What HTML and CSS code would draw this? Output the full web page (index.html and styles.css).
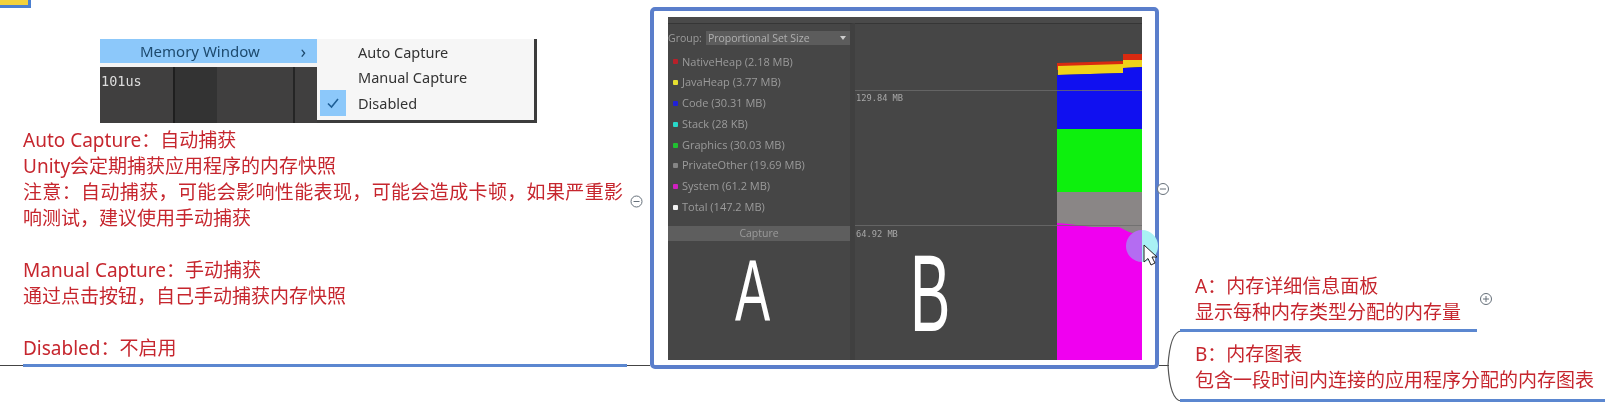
FILE: index.html
```html
<!DOCTYPE html>
<html lang="en">
<head>
  <meta charset="UTF-8">
  <title>Memory Window</title>
  <link rel="stylesheet" href="styles.css">
</head>
<body>
  <div class="map">
    <div class="corner"></div>

    <!-- menu screenshot -->
    <div class="menu-shot">
      <div class="menu-left">
        <div class="menu-item"><span>Memory Window</span><span class="arrow">&#8250;</span></div>
        <div class="menu-dark">
          <span class="time">101us</span>
          <i class="stripe s1"></i>
          <i class="stripe s2"></i>
        </div>
      </div>
      <div class="submenu">
        <div class="sub-item"><span class="tick"></span>Auto Capture</div>
        <div class="sub-item"><span class="tick"></span>Manual Capture</div>
        <div class="sub-item"><span class="tick on">
          <svg width="14" height="12" viewBox="0 0 14 12"><path d="M2 6.5 L5.5 10 L12 2" fill="none" stroke="#1f5f96" stroke-width="1.6"/></svg>
        </span>Disabled</div>
      </div>
    </div>

    <!-- left topic -->
    <div class="topic topic-left">
      <p>Auto Capture：自动捕获<br>Unity会定期捕获应用程序的内存快照<br><span class="wide">注意：自动捕获，可能会影响性能表现，可能会造成卡顿，如果严重影</span><br>响测试，建议使用手动捕获</p>
      <p>Manual Capture：手动捕获<br>通过点击按钮，自己手动捕获内存快照</p>
      <p>Disabled：不启用</p>
    </div>

    <!-- center image topic -->
    <div class="frame">
      <div class="profiler">
        <div class="side">
          <div class="group-row">
            <span>Group:</span>
            <div class="select"><span>Proportional Set Size</span><i class="caret"></i></div>
          </div>
          <ul class="legend">
            <li><i class="dot c-native"></i>NativeHeap (2.18 MB)</li>
            <li><i class="dot c-java"></i>JavaHeap (3.77 MB)</li>
            <li><i class="dot c-code"></i>Code (30.31 MB)</li>
            <li><i class="dot c-stack"></i>Stack (28 KB)</li>
            <li><i class="dot c-gfx"></i>Graphics (30.03 MB)</li>
            <li><i class="dot c-other"></i>PrivateOther (19.69 MB)</li>
            <li><i class="dot c-system"></i>System (61.2 MB)</li>
            <li><i class="dot c-total"></i>Total (147.2 MB)</li>
          </ul>
          <div class="capture">Capture</div>
          <span class="hand hand-a">A</span>
        </div>
        <div class="chart">
          <div class="plot">
            <div class="scale scale-top">129.84 MB</div>
            <div class="scale scale-mid">64.92 MB</div>
            <span class="hand hand-b">B</span>
          </div>
          <svg class="bands" width="85" height="336" viewBox="0 0 85 336">
            <path d="M0 39 L66 37 L66 30 L85 30 L85 40 L66 44 L0 46 Z" fill="#d92a10"/>
            <path d="M1 42 L66 40 L66 36 L85 36 L85 43 L66 44 L66 49 L1 51 Z" fill="#efd21a"/>
            <path d="M0 51 L66 49 L66 44 L85 43 L85 106 L0 105 Z" fill="#1010f0"/>
            <path d="M0 105 L85 105 L85 169 L0 169 Z" fill="#0df00d"/>
            <path d="M0 168 L85 168 L85 215 L0 215 Z" fill="#8a8686"/>
            <path d="M0 199 L12 200 L35 203 L62 203 L72 208 L85 212 L85 336 L0 336 Z" fill="#f000f0"/>
          </svg>
          <i class="grid grid-top"></i>
          <i class="grid grid-mid"></i>
        </div>
      </div>
    </div>

    <!-- right topics -->
    <div class="topic topic-a">A：内存详细信息面板<br>显示每种内存类型分配的内存量</div>
    <div class="topic topic-b">B：内存图表<br>包含一段时间内连接的应用程序分配的内存图表</div>

    <!-- connectors, collapse buttons, pointer -->
    <svg class="wires" width="1605" height="408" viewBox="0 0 1605 408">
      <path d="M0 365.5 H650 M1159 365.5 H1169" fill="none" stroke="#444" stroke-width="1"/>
      <path d="M1181 331 C1172 332 1169 350 1168 365.5 C1169 382 1172 400 1181 401" fill="none" stroke="#555" stroke-width="1.2"/>
      <path d="M23 365.5 H627" stroke="#5b87d0" stroke-width="3"/>
      <path d="M1180 330.5 H1477" stroke="#5b87d0" stroke-width="3"/>
      <path d="M1180 400.5 H1605" stroke="#5b87d0" stroke-width="3"/>

      <g fill="#fff" stroke="#66707a" stroke-width="1">
        <circle cx="636.5" cy="201.5" r="5.5"/>
        <circle cx="1163" cy="189" r="5.5"/>
        <circle cx="1486" cy="299" r="5.5"/>
      </g>
      <path d="M633.5 201.5 H639.5 M1160 189 H1166 M1483 299 H1489 M1486 296 V302" stroke="#66707a" stroke-width="1"/>

      <path d="M1142 230 A16 16 0 0 0 1142 262 Z" fill="#b46cf2"/>
      <path d="M1142 230 A16 16 0 0 1 1142 262 Z" fill="#a9f1f4"/>
      <path d="M1144 245 L1144 262 L1148 258.5 L1151 265 L1155 263 L1152 257 L1157 257 Z" fill="#fff" stroke="#222" stroke-width="1"/>
    </svg>
  </div>
</body>
</html>
```

FILE: styles.css
```css
body{
  margin: 0;
  padding: 0;
  background: #fff;
}
.map{
  position: relative;
  width: 1605px;
  height: 408px;
  overflow: hidden;
  font-family: "Noto Sans", "Noto Sans CJK SC", sans-serif;
}
.corner{
  position: absolute;
  left: 0;
  top: 0;
  width: 28px;
  height: 5px;
  background: #f3d23c;
  border: solid #4a7fd0;
  border-width: 0 3px 3px 0;
}

/* menu */
.menu-shot{
  position: absolute;
  left: 100px;
  top: 39px;
  width: 437px;
  height: 84px;
  display: flex;
  background: #3c3c3c;
  filter: blur(.4px);
}
.menu-left{
  width: 217px;
  display: flex;
  flex-direction: column;
}
.menu-item{
  height: 24px;
  background: #8cc8fa;
  border-bottom: 4px solid #f4f4f4;
  display: flex;
  align-items: center;
  justify-content: space-between;
  padding: 0 11px 0 40px;
  font-size: 15px;
  color: #1d4a6e;
}
.arrow{
  font-size: 18px;
  line-height: 20px;
}
.menu-dark{
  flex: 1;
  display: flex;
  position: relative;
  background: #403f3f;
}
.time{
  font-family: "DejaVu Sans Mono", monospace;
  font-size: 13.5px;
  color: #ddd;
  line-height: 28px;
  padding-left: 1px;
}
.stripe{
  position: absolute;
  top: 0;
  bottom: 0;
  width: 2px;
  background: #222;
}
.s1{ left: 73px; width: 42px; background: #333; border-left: 2px solid #1f1f1f; }
.s2{ left: 193px; background: #252525; }
.submenu{
  width: 216px;
  height: 81px;
  background: #f6f6f6;
  box-shadow: 1px 0 0 #f6f6f6;
}
.sub-item{
  height: 25.5px;
  display: flex;
  align-items: center;
  gap: 12px;
  padding-left: 3px;
  font-size: 14.5px;
  color: #333;
}
.tick{
  width: 26px;
  height: 26px;
  display: flex;
  align-items: center;
  justify-content: center;
}
.tick.on{
  background: #8cc8fa;
}

/* text topics */
.topic{
  position: absolute;
  font-size: 19px;
  line-height: 26px;
  color: #c6262e;
  filter: blur(.25px);
}
.topic p{
  margin: 0 0 26px;
}
.topic-left{
  left: 23px;
  top: 127px;
  white-space: nowrap;
}
.wide{
  letter-spacing: .37px;
}
.topic-a{
  left: 1195px;
  top: 273px;
  white-space: nowrap;
}
.topic-b{
  left: 1195px;
  top: 341px;
  white-space: nowrap;
}

/* image topic */
.frame{
  position: absolute;
  left: 650px;
  top: 7px;
  width: 474px;
  height: 343px;
  border: 4px solid #5a7ecb;
  border-radius: 5px;
  padding: 6px 13px 5px 14px;
  background: #fff;
}
.profiler{
  position: relative;
  width: 474px;
  height: 343px;
  display: flex;
  background: #464646;
  border-top: 6px solid #4a4a4a;
  box-sizing: border-box;
  font-family: "Open Sans", sans-serif;
  color: #9b9b9b;
  filter: blur(.5px);
}
.side{
  width: 182px;
  padding-top: 7px;
  border-top: 1px solid #363636;
  border-right: 5px solid #404040;
}
.group-row{
  display: flex;
  align-items: center;
  gap: 4px;
  height: 14px;
  font-size: 10.5px;
}
.select{
  flex: 1;
  height: 14px;
  background: #5c5c5c;
  display: flex;
  align-items: center;
  justify-content: space-between;
  padding: 0 4px 0 2px;
  color: #b0b0b0;
}
.caret{
  border: solid transparent;
  border-width: 4px 3px 0;
  border-top-color: #ccc;
}
.legend{
  list-style: none;
  margin: 6.5px 0 0;
  padding: 0;
}
.legend li{
  height: 20.8px;
  line-height: 20.8px;
  display: flex;
  align-items: center;
  gap: 4px;
  padding-left: 5px;
  font-size: 11px;
  white-space: nowrap;
}
.dot{
  width: 5px;
  height: 5px;
  border-radius: 1px;
}
.c-native{ background: #b8202a; }
.c-java{ background: #e6e030; }
.c-code{ background: #2020d8; }
.c-stack{ background: #28d8c8; }
.c-gfx{ background: #20c030; }
.c-other{ background: #858585; }
.c-system{ background: #d020c0; }
.c-total{ background: #f0f0f0; }
.capture{
  margin-top: 8.5px;
  height: 15px;
  line-height: 15px;
  background: #5e5e5e;
  text-align: center;
  font-size: 10.5px;
}
.chart{
  flex: 1;
  position: relative;
  display: flex;
  border-top: 1px solid #363636;
}
.plot{
  flex: 1;
  position: relative;
}
.bands{
  display: block;
}
.grid{
  position: absolute;
  left: 0;
  right: 0;
  height: 1px;
  background: #6b6b6b;
}
.grid-top{ top: 66px; opacity: .8; }
.grid-mid{ top: 201px; opacity: .8; }
.scale{
  position: absolute;
  left: 1px;
  font-family: "DejaVu Sans Mono", monospace;
  font-size: 8.7px;
  color: #a8a8a8;
  white-space: nowrap;
}
.scale-top{ top: 69px; }
.scale-mid{ top: 205px; }
.hand{
  position: absolute;
  font-family: "Liberation Sans", sans-serif;
  line-height: .75;
  color: #fff;
  transform-origin: left top;
}
.hand-a{
  left: 67px;
  top: 235px;
  font-size: 88px;
  transform: scaleX(.6);
}
.hand-b{
  left: 55px;
  top: 228px;
  font-size: 110px;
  transform: scaleX(.55);
}
.wires{
  position: absolute;
  left: 0;
  top: 0;
  pointer-events: none;
}
```
